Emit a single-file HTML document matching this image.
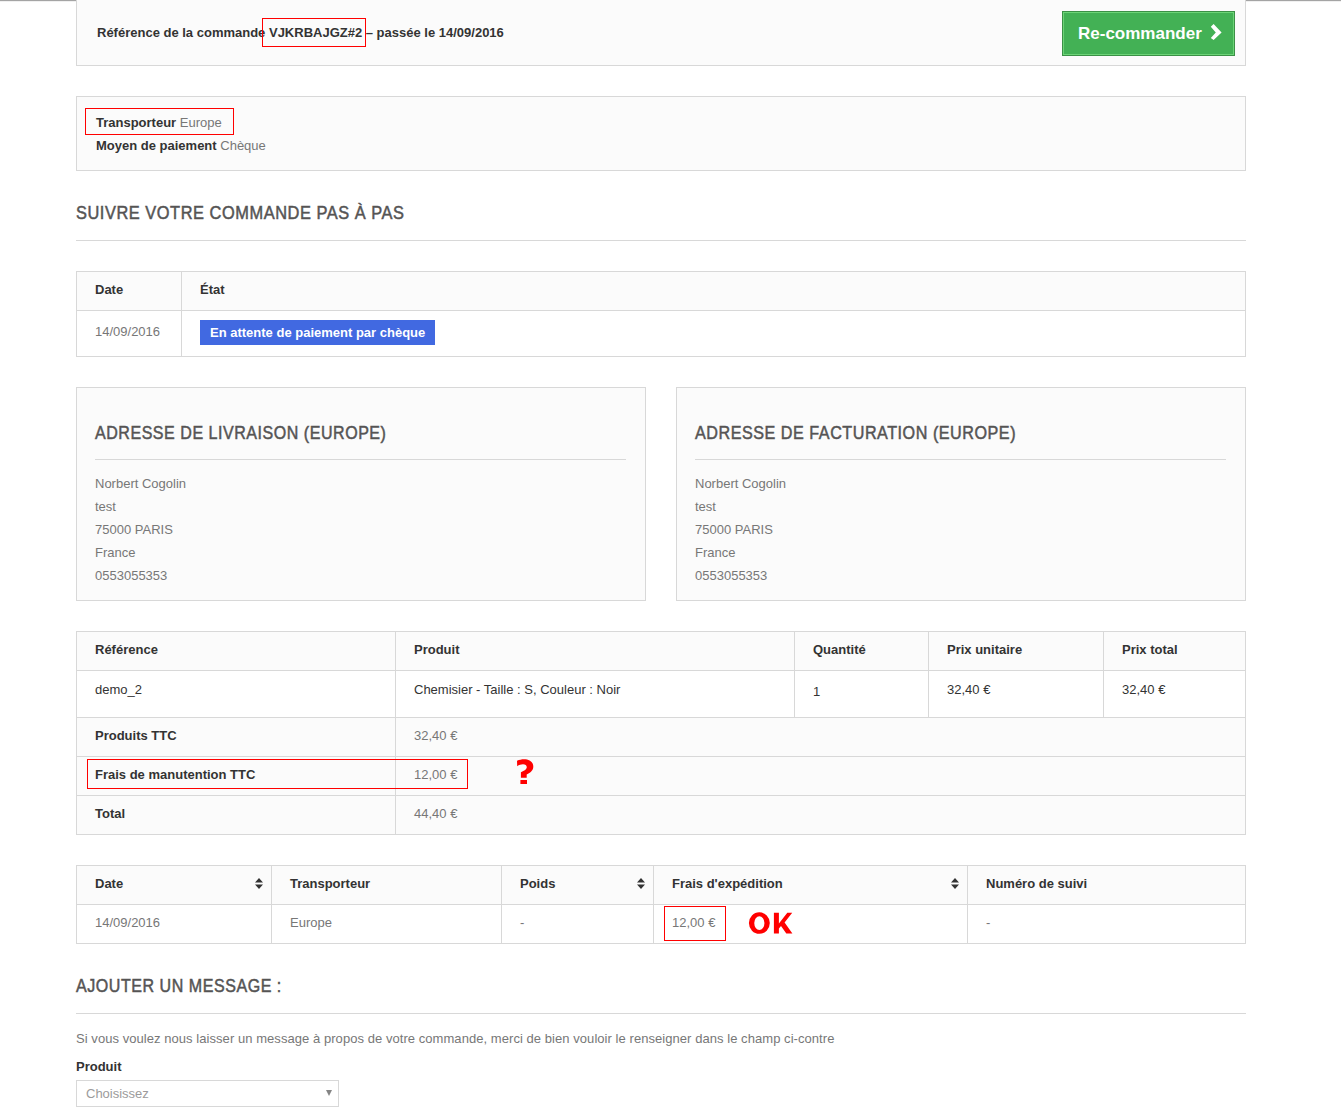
<!DOCTYPE html>
<html><head><meta charset="utf-8">
<style>
*{margin:0;padding:0;box-sizing:border-box}
html,body{width:1341px;height:1116px;overflow:hidden;background:#fff}
body{position:relative;font-family:"Liberation Sans",sans-serif;font-size:13px;line-height:18px;color:#333}
.a{position:absolute;white-space:nowrap}
.box{position:absolute;border:1px solid #d8d8d8;background:#fbfbfb}
.hl{position:absolute;height:1px;background:#d8d8d8}
.vl{position:absolute;width:1px;background:#d8d8d8}
.bg{position:absolute;background:#fbfbfb}
.b{font-weight:bold;color:#333}
.g{color:#777}
.h{font-size:18px;line-height:22px;color:#555454;text-transform:uppercase;-webkit-text-stroke:0.5px #555454;transform-origin:0 0;letter-spacing:0.6px}
.red{position:absolute;border:1px solid #f00}
.sort{position:absolute;width:8px;height:11px}
</style></head><body>
<!-- top line -->
<div class="a" style="left:0;top:0;width:1341px;height:1px;background:#a4a4a4"></div>
<div class="a" style="left:0;top:1px;width:1341px;height:1px;background:#f0f0f0"></div>

<!-- box 1 -->
<div class="box" style="left:76px;top:-1px;width:1170px;height:67px;border-top:none"></div>
<div class="a b" style="left:97px;top:24px">Référence de la commande VJKRBAJGZ#2 – passée le 14/09/2016</div>
<div class="red" style="left:262px;top:18px;width:104px;height:29px"></div>
<div class="a" style="left:1062px;top:11px;width:173px;height:45px;background:#43b155;border:1px solid #3b9046"><div style="position:absolute;left:0;top:0;right:0;bottom:0;border:1px solid #6cd477"></div></div>
<div class="a" style="left:1078px;top:23px;font-size:17px;line-height:21px;font-weight:bold;color:#fff">Re-commander</div>
<svg class="a" style="left:1209px;top:24px" width="14" height="17" viewBox="0 0 14 17"><path d="M4.6 0 L12.6 8.4 L4.6 15.9 L1.8 13.9 L6.8 8.4 L1.8 2.7 Z" fill="#fff"/></svg>

<!-- box 2 -->
<div class="box" style="left:76px;top:96px;width:1170px;height:75px"></div>
<div class="a" style="left:96px;top:114px"><span class="b">Transporteur</span> <span class="g">Europe</span></div>
<div class="a" style="left:96px;top:137px"><span class="b">Moyen de paiement</span> <span class="g">Chèque</span></div>
<div class="red" style="left:85px;top:108px;width:149px;height:27px"></div>

<!-- heading 1 -->
<div class="a h" style="left:76px;top:202px;transform:scaleX(0.910)">Suivre votre commande pas à pas</div>
<div class="hl" style="left:76px;top:240px;width:1170px"></div>

<!-- table 1 -->
<div class="box" style="left:76px;top:271px;width:1170px;height:86px;background:#fff"></div>
<div class="bg" style="left:77px;top:272px;width:1168px;height:38px"></div>
<div class="hl" style="left:77px;top:310px;width:1168px"></div>
<div class="vl" style="left:181px;top:272px;height:84px"></div>
<div class="a b" style="left:95px;top:281px">Date</div>
<div class="a b" style="left:200px;top:281px">État</div>
<div class="a g" style="left:95px;top:323px">14/09/2016</div>
<div class="a" style="left:200px;top:320px;width:235px;height:25px;background:#4169e1"></div>
<div class="a b" style="left:210px;top:324px;color:#fff">En attente de paiement par chèque</div>

<!-- address boxes -->
<div class="box" style="left:76px;top:387px;width:570px;height:214px"></div>
<div class="a h" style="left:95px;top:422px;transform:scaleX(0.89)">Adresse de livraison (Europe)</div>
<div class="hl" style="left:95px;top:459px;width:531px"></div>
<div class="a g" style="left:95px;top:472px;line-height:23px">Norbert Cogolin<br>test<br>75000 PARIS<br>France<br>0553055353</div>

<div class="box" style="left:676px;top:387px;width:570px;height:214px"></div>
<div class="a h" style="left:695px;top:422px;transform:scaleX(0.896)">Adresse de facturation (Europe)</div>
<div class="hl" style="left:695px;top:459px;width:531px"></div>
<div class="a g" style="left:695px;top:472px;line-height:23px">Norbert Cogolin<br>test<br>75000 PARIS<br>France<br>0553055353</div>

<!-- product table -->
<div class="box" style="left:76px;top:631px;width:1170px;height:204px"></div>
<div class="a" style="left:77px;top:671px;width:1168px;height:46px;background:#fff"></div>
<div class="hl" style="left:77px;top:670px;width:1168px"></div>
<div class="hl" style="left:77px;top:717px;width:1168px"></div>
<div class="hl" style="left:77px;top:756px;width:1168px"></div>
<div class="hl" style="left:77px;top:795px;width:1168px"></div>
<div class="vl" style="left:395px;top:632px;height:202px"></div>
<div class="vl" style="left:794px;top:632px;height:85px"></div>
<div class="vl" style="left:928px;top:632px;height:85px"></div>
<div class="vl" style="left:1103px;top:632px;height:85px"></div>
<div class="a b" style="left:95px;top:641px">Référence</div>
<div class="a b" style="left:414px;top:641px">Produit</div>
<div class="a b" style="left:813px;top:641px">Quantité</div>
<div class="a b" style="left:947px;top:641px">Prix unitaire</div>
<div class="a b" style="left:1122px;top:641px">Prix total</div>
<div class="a" style="left:95px;top:681px">demo_2</div>
<div class="a" style="left:414px;top:681px">Chemisier - Taille : S, Couleur : Noir</div>
<div class="a" style="left:813px;top:683px">1</div>
<div class="a" style="left:947px;top:681px">32,40 €</div>
<div class="a" style="left:1122px;top:681px">32,40 €</div>
<div class="a b" style="left:95px;top:727px">Produits TTC</div>
<div class="a g" style="left:414px;top:727px">32,40 €</div>
<div class="a b" style="left:95px;top:766px">Frais de manutention TTC</div>
<div class="a g" style="left:414px;top:766px">12,00 €</div>
<div class="a b" style="left:95px;top:805px">Total</div>
<div class="a g" style="left:414px;top:805px">44,40 €</div>
<div class="red" style="left:87px;top:759px;width:381px;height:30px"></div>
<svg class="a" style="left:505px;top:752px" width="40" height="40" viewBox="0 0 40 40"><path d="M12 8.8 C14.5 7.8 16.5 7.3 19 7.3 C24.5 7.3 28.3 10 28.3 14.6 C28.3 18.6 25.5 20.8 21.7 22.6 L21.7 25.8 L15.9 25.8 L15.9 20.2 C19.5 18.8 21.8 17.2 21.8 15.3 C21.8 13.3 20.2 12.3 18 12.3 C16 12.3 14 13 12.2 14.2 Z M15.4 28 H22 V31.9 H15.4 Z" fill="#f00"/></svg>

<!-- shipping table -->
<div class="box" style="left:76px;top:865px;width:1170px;height:79px;background:#fff"></div>
<div class="bg" style="left:77px;top:866px;width:1168px;height:38px"></div>
<div class="hl" style="left:77px;top:904px;width:1168px"></div>
<div class="vl" style="left:271px;top:866px;height:77px"></div>
<div class="vl" style="left:501px;top:866px;height:77px"></div>
<div class="vl" style="left:653px;top:866px;height:77px"></div>
<div class="vl" style="left:967px;top:866px;height:77px"></div>
<div class="a b" style="left:95px;top:875px">Date</div>
<div class="a b" style="left:290px;top:875px">Transporteur</div>
<div class="a b" style="left:520px;top:875px">Poids</div>
<div class="a b" style="left:672px;top:875px">Frais d'expédition</div>
<div class="a b" style="left:986px;top:875px">Numéro de suivi</div>
<svg class="sort" style="left:255px;top:878px" viewBox="0 0 8 11"><path d="M0 4.5 L4 0 L8 4.5Z M0 6.5 L4 11 L8 6.5Z" fill="#333"/></svg>
<svg class="sort" style="left:637px;top:878px" viewBox="0 0 8 11"><path d="M0 4.5 L4 0 L8 4.5Z M0 6.5 L4 11 L8 6.5Z" fill="#333"/></svg>
<svg class="sort" style="left:951px;top:878px" viewBox="0 0 8 11"><path d="M0 4.5 L4 0 L8 4.5Z M0 6.5 L4 11 L8 6.5Z" fill="#333"/></svg>
<div class="a g" style="left:95px;top:914px">14/09/2016</div>
<div class="a g" style="left:290px;top:914px">Europe</div>
<div class="a g" style="left:520px;top:914px">-</div>
<div class="a g" style="left:672px;top:914px">12,00 €</div>
<div class="a g" style="left:986px;top:914px">-</div>
<div class="red" style="left:664px;top:906px;width:62px;height:35px"></div>
<svg class="a" style="left:742px;top:904px" width="56" height="36" viewBox="0 0 56 36"><path fill-rule="evenodd" d="M6.9 19.1 A10.45 10.75 0 1 0 27.8 19.1 A10.45 10.75 0 1 0 6.9 19.1 Z M12.25 19.1 A5.1 6.9 0 1 0 22.45 19.1 A5.1 6.9 0 1 0 12.25 19.1 Z" fill="#f00"/><path d="M31.9 8.8 H36.9 V19.6 L45.3 8.8 H50.2 L42.6 18.6 L50.4 29.6 H44.3 L39 22 L36.9 24.4 V29.6 H31.9 Z" fill="#f00"/></svg>

<!-- message -->
<div class="a h" style="left:76px;top:975px;transform:scaleX(0.891)">Ajouter un message :</div>
<div class="hl" style="left:76px;top:1013px;width:1170px"></div>
<div class="a g" style="left:76px;top:1030px;letter-spacing:0.055px">Si vous voulez nous laisser un message à propos de votre commande, merci de bien vouloir le renseigner dans le champ ci-contre</div>
<div class="a b" style="left:76px;top:1058px">Produit</div>
<div class="a" style="left:76px;top:1080px;width:263px;height:27px;border:1px solid #d8d8d8;background:#fff"></div>
<div class="a" style="left:86px;top:1085px;color:#9c9b9b">Choisissez</div>
<svg class="a" style="left:326px;top:1090px" width="6" height="6" viewBox="0 0 6 6"><path d="M0 0 L6 0 L3 6Z" fill="#858585"/></svg>
</body></html>
